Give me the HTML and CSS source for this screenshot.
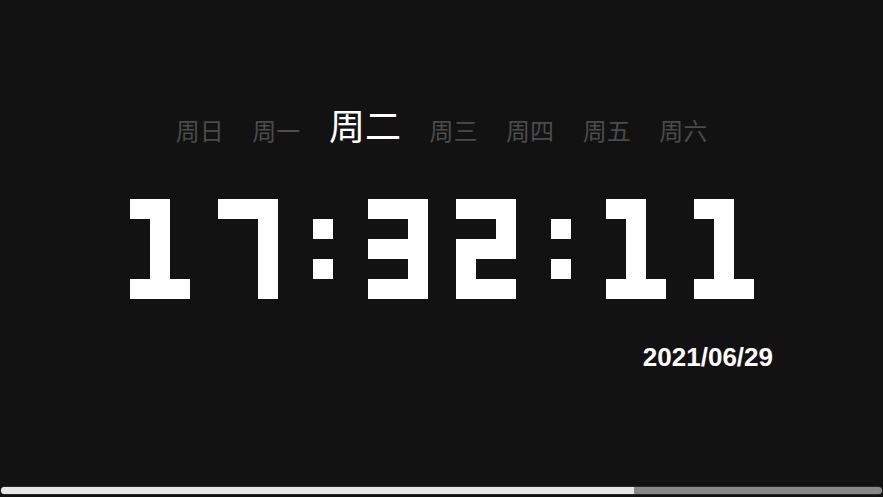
FILE: index.html
```html
<!DOCTYPE html>
<html lang="zh">
<head>
<meta charset="utf-8">
<title>Clock</title>
<link rel="stylesheet" href="styles.css">
</head>
<body>
<main class="clock">
  <div class="weekdays">
    <span class="day">周日</span>
    <span class="day">周一</span>
    <span class="day active">周二</span>
    <span class="day">周三</span>
    <span class="day">周四</span>
    <span class="day">周五</span>
    <span class="day">周六</span>
  </div>
  <div class="time">
    <span class="d d1">1</span>
    <span class="d d7">7</span>
    <span class="colon">:</span>
    <span class="d d3">3</span>
    <span class="d d2">2</span>
    <span class="colon">:</span>
    <span class="d d1">1</span>
    <span class="d d1">1</span>
  </div>
  <div class="date">2021/06/29</div>
  <div class="progress"><div class="progress-fill"></div></div>
</main>
</body>
</html>
```
FILE: styles.css
```css
html, body {
  margin: 0;
  padding: 0;
  background: #121212;
}
.clock {
  height: 100vh;
  display: flex;
  flex-direction: column;
  box-sizing: border-box;
  padding-top: 106px;
}
.weekdays {
  display: flex;
  justify-content: center;
  align-items: flex-end;
  gap: 28.6px;
  height: 36px;
  font-family: "Noto Sans CJK SC", "Noto Sans", sans-serif;
}
.day {
  font-size: 24px;
  line-height: 1;
  color: #4b4b4b;
}
.day.active {
  font-size: 36px;
  color: #ffffff;
}
.time {
  margin-top: 57px;
  display: flex;
  justify-content: flex-start;
  padding-left: 130px;
  gap: 28px;
  height: 100px;
}
.d, .colon {
  position: relative;
  display: block;
  height: 100px;
  overflow: hidden;
  color: transparent;
  font-family: "Liberation Sans", sans-serif;
  font-size: 50px;
  line-height: 100px;
  text-align: center;
}
.d { width: 60px; }
.colon {
  width: 20px;
  margin: 0 7px;
}
.d::before, .colon::before {
  content: "";
  position: absolute;
  left: 0;
  top: 0;
  width: 20px;
  height: 20px;
  background: #fff;
}
.colon::before {
  top: 20px;
  box-shadow: 0 40px #fff;
}
.d1::before {
  box-shadow:
    20px 0 #fff,
    20px 20px #fff,
    20px 40px #fff,
    20px 60px #fff,
    0 80px #fff,
    20px 80px #fff,
    40px 80px #fff;
}
.d7::before {
  box-shadow:
    20px 0 #fff,
    40px 0 #fff,
    40px 20px #fff,
    40px 40px #fff,
    40px 60px #fff,
    40px 80px #fff;
}
.d3::before {
  box-shadow:
    20px 0 #fff,
    40px 0 #fff,
    40px 20px #fff,
    0 40px #fff,
    20px 40px #fff,
    40px 40px #fff,
    40px 60px #fff,
    0 80px #fff,
    20px 80px #fff,
    40px 80px #fff;
}
.d2::before {
  box-shadow:
    20px 0 #fff,
    40px 0 #fff,
    40px 20px #fff,
    0 40px #fff,
    20px 40px #fff,
    40px 40px #fff,
    0 60px #fff,
    0 80px #fff,
    20px 80px #fff,
    40px 80px #fff;
}
.date {
  margin-top: 43px;
  padding-right: 110px;
  text-align: right;
  font-family: "Liberation Sans", Arial, sans-serif;
  font-weight: bold;
  font-size: 26px;
  line-height: 30px;
  color: #fff;
}
.progress {
  margin: auto 1px 3px 1px;
  height: 7px;
  border-radius: 4px;
  background: #888888;
  overflow: hidden;
  box-shadow: 0 0 0 0.5px #3a3a3a;
}
.progress-fill {
  width: 71.8%;
  height: 100%;
  background: #e6e6e6;
}
```
